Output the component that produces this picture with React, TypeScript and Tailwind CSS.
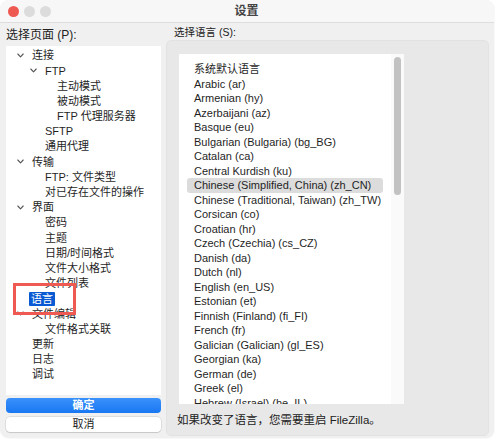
import React from "react";

const font = { fontFamily: '"Helvetica Neue", "Liberation Sans", "Noto Sans CJK SC", sans-serif' };

type Node = { label: string; level: number; open?: boolean; selected?: boolean };

const tree: Node[] = [
  { label: "连接", level: 0, open: true },
  { label: "FTP", level: 1, open: true },
  { label: "主动模式", level: 2 },
  { label: "被动模式", level: 2 },
  { label: "FTP 代理服务器", level: 2 },
  { label: "SFTP", level: 1 },
  { label: "通用代理", level: 1 },
  { label: "传输", level: 0, open: true },
  { label: "FTP: 文件类型", level: 1 },
  { label: "对已存在文件的操作", level: 1 },
  { label: "界面", level: 0, open: true },
  { label: "密码", level: 1 },
  { label: "主题", level: 1 },
  { label: "日期/时间格式", level: 1 },
  { label: "文件大小格式", level: 1 },
  { label: "文件列表", level: 1 },
  { label: "语言", level: 0, selected: true },
  { label: "文件编辑", level: 0, open: true },
  { label: "文件格式关联", level: 1 },
  { label: "更新", level: 0 },
  { label: "日志", level: 0 },
  { label: "调试", level: 0 },
];

const languages = [
  "系统默认语言",
  "Arabic (ar)",
  "Armenian (hy)",
  "Azerbaijani (az)",
  "Basque (eu)",
  "Bulgarian (Bulgaria) (bg_BG)",
  "Catalan (ca)",
  "Central Kurdish (ku)",
  "Chinese (Simplified, China) (zh_CN)",
  "Chinese (Traditional, Taiwan) (zh_TW)",
  "Corsican (co)",
  "Croatian (hr)",
  "Czech (Czechia) (cs_CZ)",
  "Danish (da)",
  "Dutch (nl)",
  "English (en_US)",
  "Estonian (et)",
  "Finnish (Finland) (fi_FI)",
  "French (fr)",
  "Galician (Galician) (gl_ES)",
  "Georgian (ka)",
  "German (de)",
  "Greek (el)",
  "Hebrew (Israel) (he_IL)",
];

function Chevron() {
  return (
    <svg width="7" height="5" viewBox="0 0 7 5" className="shrink-0">
      <polyline points="0.8,1 3.5,3.8 6.2,1" fill="none" stroke="#555" strokeWidth="1.1" strokeLinecap="round" strokeLinejoin="round" />
    </svg>
  );
}

function TreeRow({ node }: { node: Node }) {
  const indent = ["pl-[11px]", "pl-[24px]", "pl-[51px]"][node.level];
  return (
    <div className={`flex items-center h-[15.2px] whitespace-nowrap ${indent}`}>
      {node.level < 2 && (
        <div className="w-[15px] flex items-center">{node.open ? <Chevron /> : null}</div>
      )}
      <span
        className={
          node.selected
            ? "bg-[#0a5bd3] text-white px-[2px] -ml-[3px] leading-[14px] rounded-[1px]"
            : "text-[#1f1f1f]"
        }
      >
        {node.label}
      </span>
    </div>
  );
}

export default function App() {
  return (
    <div className="w-[497px] h-[441px] bg-white relative overflow-hidden text-[11px]" style={font}>
      <div className="h-[439px] w-[495px] bg-[#f0f0f0] rounded-[9px] overflow-hidden flex flex-col border-r border-b border-[#f8f8f8]">
        {/* title bar */}
        <div className="h-[23px] shrink-0 bg-[#f7f7f7] border-b border-[#dedede] flex items-center px-[8px] relative">
          <div className="flex gap-[5px]">
            <div className="w-[11px] h-[11px] rounded-full bg-[#ee5a52]" />
            <div className="w-[11px] h-[11px] rounded-full bg-[#dcdcdc]" />
            <div className="w-[11px] h-[11px] rounded-full bg-[#dcdcdc]" />
          </div>
          <div className="flex-1 text-center text-[12px] font-semibold text-[#444] pr-[44px]">设置</div>
        </div>

        <div className="flex-1 flex">
          {/* left column */}
          <div className="w-[166px] shrink-0 flex flex-col pl-[6px] pr-[5px]">
            <div className="h-[23px] flex items-center text-[12px] text-[#222] pt-[1px]">选择页面 (P):</div>
            <div className="h-[349px] bg-white pt-[2px] text-[11px]">
              {tree.map((n) => (
                <TreeRow key={n.label} node={n} />
              ))}
            </div>
            <button className="mt-[3px] h-[15px] rounded-[4px] bg-gradient-to-b from-[#3a91fb] to-[#1877f2] text-white text-[11px] font-semibold leading-[15px]">
              确定
            </button>
            <button className="mt-[4px] h-[15px] rounded-[4px] bg-white text-[#222] text-[11px] leading-[15px] shadow-[0_0_0_0.5px_rgba(0,0,0,0.15),0_1px_1px_rgba(0,0,0,0.1)]">
              取消
            </button>
          </div>

          {/* right column */}
          <div className="flex-1 flex flex-col pr-[5px]">
            <div className="h-[17px] flex items-center pl-[8px] text-[10.5px] text-[#222] pt-[3px]">选择语言 (S):</div>
            <div className="h-[396px] bg-[#e8e8e8] rounded-[5px] border border-[#e2e2e2] pt-[13px] pl-[12px] flex flex-col">
              <div className="w-[225px] h-[350px] bg-white flex overflow-hidden">
                <div className="flex-1 pt-[8px] pl-[8px] pr-[8px] text-[11px] text-[#1f1f1f] whitespace-nowrap">
                  {languages.map((l) => (
                    <div
                      key={l}
                      className={`h-[14.5px] leading-[14.5px] pl-[7px] rounded-[3px] ${
                        l.startsWith("Chinese (Simplified") ? "bg-[#dcdcdc]" : ""
                      }`}
                    >
                      {l}
                    </div>
                  ))}
                </div>
                <div className="w-[13px] bg-[#fafafa] pt-[3px] flex justify-center">
                  <div className="w-[7px] h-[138px] rounded-full bg-[#c2c2c2]" />
                </div>
              </div>
              <div className="mt-[8px] text-[11.5px] text-[#222] -ml-[2px]">如果改变了语言，您需要重启 FileZilla。</div>
            </div>
          </div>
        </div>
      </div>

      {/* annotation */}
      <div className="absolute left-[13px] top-[283px] w-[63px] h-[32px] border-[3.5px] border-[#ee5a52]" />
    </div>
  );
}
